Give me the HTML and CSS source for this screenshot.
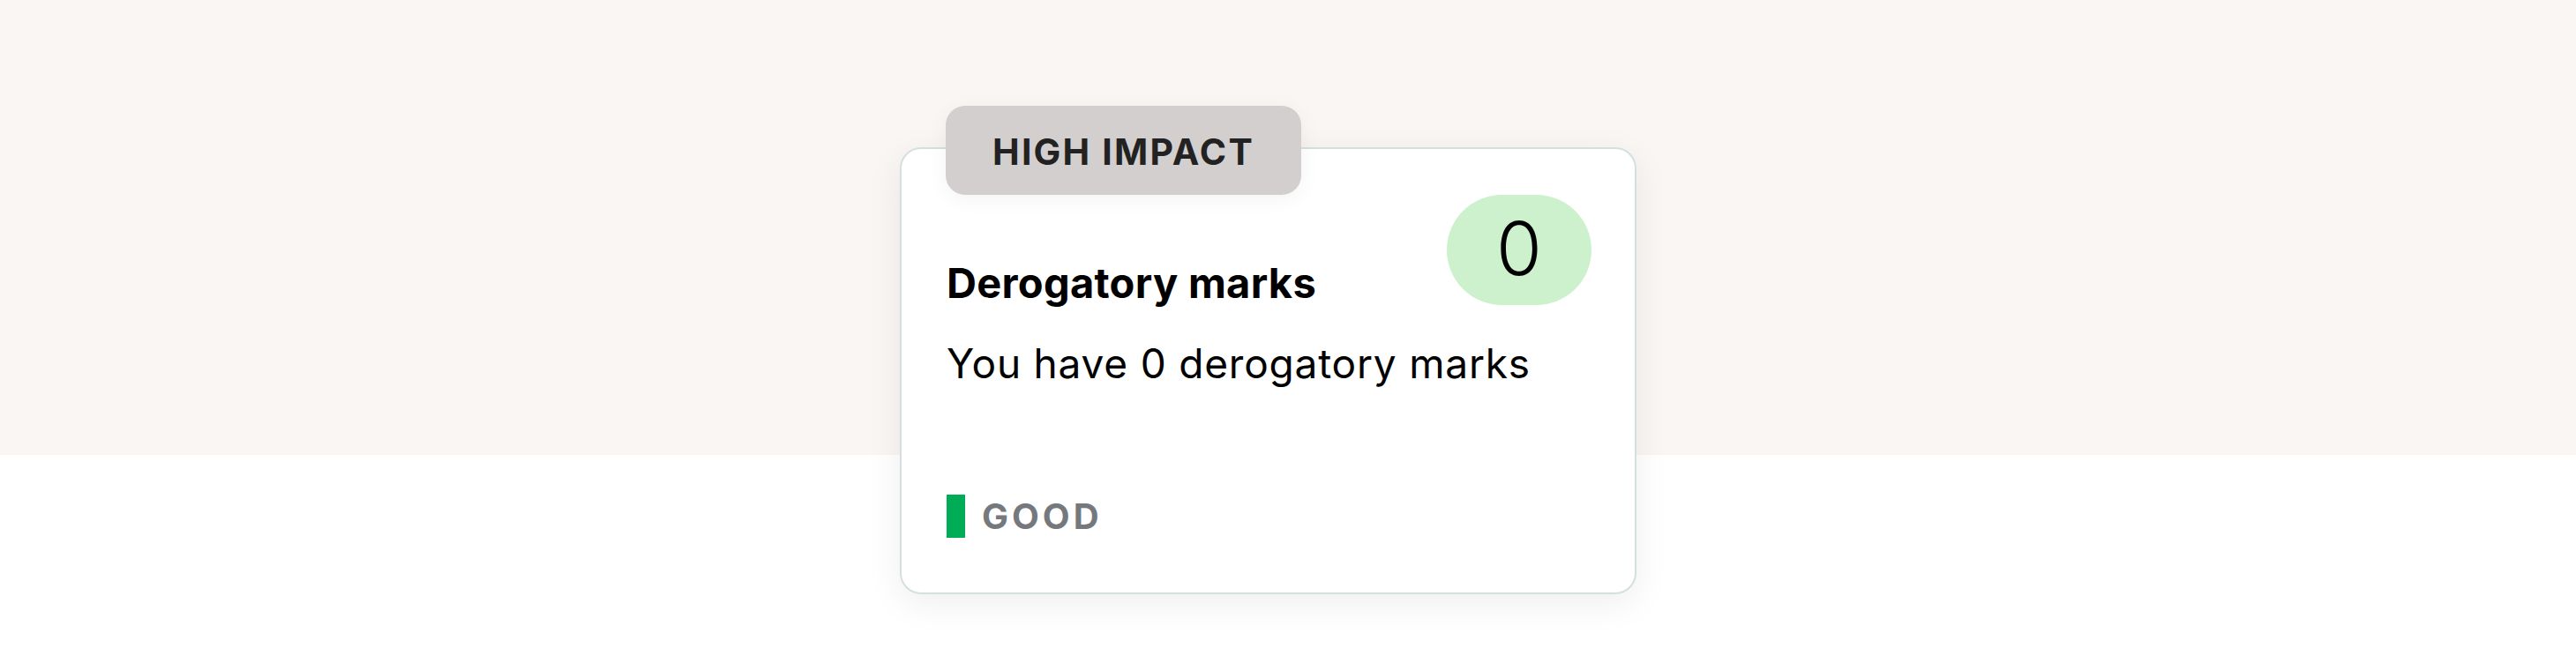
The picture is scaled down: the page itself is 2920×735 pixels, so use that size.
FILE: index.html
```html
<!DOCTYPE html>
<html lang="en">
<head>
    <meta charset="UTF-8">
    <meta name="viewport" content="width=device-width, initial-scale=1.0">
    <title>Derogatory marks</title>
    <link rel="stylesheet" href="styles.css">
</head>
<body>
    <div class="page">
        <div class="factor-card">
            <div class="impact-tag">HIGH IMPACT</div>
            <div class="card-head">
                <h2 class="card-title">Derogatory marks</h2>
                <div class="count-pill">0</div>
            </div>
            <p class="card-text">You have 0 derogatory marks</p>
            <div class="rating">
                <span class="rating-bar"></span>
                <span class="rating-label">GOOD</span>
            </div>
        </div>
    </div>
</body>
</html>
```

FILE: styles.css
```css
body {
    margin: 0;
    padding: 0;
    font-family: Inter, "Liberation Sans", Arial, sans-serif;
    color: #000;
    background: linear-gradient(#f9f6f3 516px, #ffffff 516px);
    min-height: 735px;
}

.page {
    padding: 167px 0 0 1020px;
}

.factor-card {
    position: relative;
    width: 835px;
    box-sizing: border-box;
    background-color: #fff;
    border: 2px solid #d4e0e0;
    border-radius: 24px;
    padding: 52px 49px 62px 51px;
    box-shadow: 0 10px 40px rgba(0, 0, 0, 0.07);
}

.impact-tag {
    position: absolute;
    top: -49px;
    left: 50px;
    width: 403px;
    height: 101px;
    box-sizing: border-box;
    padding-top: 3px;
    display: flex;
    align-items: center;
    justify-content: center;
    background-color: #d3cfce;
    border-radius: 22px;
    font-size: 41px;
    font-weight: 700;
    letter-spacing: 2.2px;
    color: #222;
    box-shadow: 0 4px 24px rgba(0, 0, 0, 0.05);
}

.card-head {
    display: flex;
    justify-content: space-between;
    align-items: flex-end;
}

.card-title {
    margin: 0 0 -4px 0;
    font-size: 47px;
    line-height: 58px;
    font-weight: 700;
    letter-spacing: 0.3px;
}

.count-pill {
    width: 164px;
    height: 125px;
    border-radius: 63px;
    background-color: #ccf1cc;
    display: flex;
    justify-content: center;
    align-items: center;
    padding-bottom: 4px;
    box-sizing: border-box;
    font-size: 84px;
    font-weight: 300;
}

.card-text {
    margin: 38px 0 0 0;
    font-size: 46px;
    line-height: 56px;
    letter-spacing: 0.8px;
}

.rating {
    display: flex;
    align-items: center;
    gap: 19px;
    margin-top: 121px;
}

.rating-bar {
    width: 21px;
    height: 49px;
    background-color: #00ad56;
}

.rating-label {
    font-size: 40px;
    font-weight: 700;
    letter-spacing: 4px;
    color: #75787d;
}
```
